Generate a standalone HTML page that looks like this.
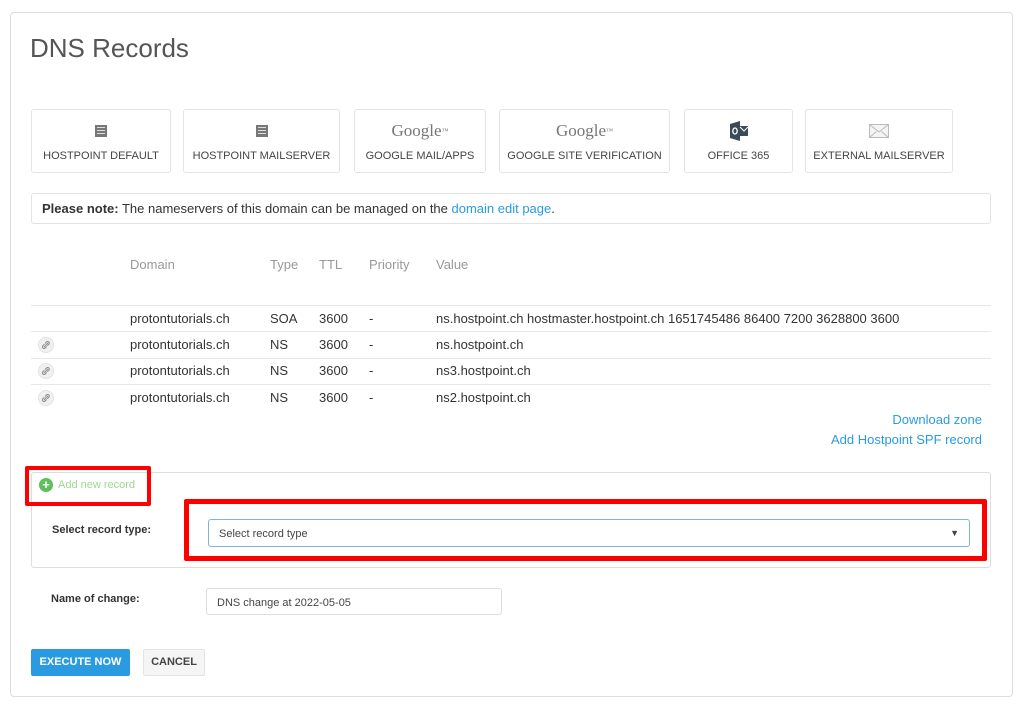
<!DOCTYPE html>
<html><head><style>
*{margin:0;padding:0;box-sizing:border-box}
body{width:1024px;height:713px;background:#fff;font-family:"Liberation Sans",sans-serif;color:#444;position:relative;overflow:hidden}
.a{position:absolute}
.card{left:10px;top:12px;width:1003px;height:685px;border:1px solid #ddd;border-radius:4px}
h1{position:absolute;left:30px;top:33px;font-size:26px;font-weight:normal;color:#555}
.btn{position:absolute;top:109px;height:64px;border:1px solid #e3e3e3;border-radius:3px;font-size:11px;color:#444;text-align:center}
.btn .l{position:absolute;left:0;right:0;top:40px}
.btn .i{position:absolute;left:0;right:0;top:12px;height:18px;display:flex;justify-content:center;align-items:center}
.g{font-family:"Liberation Serif",serif;font-size:17px;color:#777}
.note{left:31px;top:193px;width:960px;height:31px;border:1px solid #e3e3e3;border-radius:3px;font-size:13px;padding:7px 10px;color:#333}
.hd{top:257px;font-size:13px;color:#999}
.ln{left:31px;width:960px;height:1px;background:#e8e8e8}
.td{font-size:13px;color:#333}
.lk{color:#2a9be0;font-size:13px}
.chain{width:16px;height:16px;border-radius:50%;background:#f0f0f0;border:1px solid #e3e3e3}
</style></head><body>
<div class="a card"></div>
<h1>DNS Records</h1>

<div class="btn" style="left:31px;width:140px"><div class="i"><div style="width:12px;height:12px;border:2px solid #777;background:repeating-linear-gradient(#ddd 0 1px,#777 1px 3px)"></div></div><div class="l">HOSTPOINT DEFAULT</div></div>
<div class="btn" style="left:183px;width:157px"><div class="i"><div style="width:12px;height:12px;border:2px solid #777;background:repeating-linear-gradient(#ddd 0 1px,#777 1px 3px)"></div></div><div class="l">HOSTPOINT MAILSERVER</div></div>
<div class="btn" style="left:354px;width:132px"><div class="i g">Google<sup style="font-size:7px">™</sup></div><div class="l">GOOGLE MAIL/APPS</div></div>
<div class="btn" style="left:499px;width:171px"><div class="i g">Google<sup style="font-size:7px">™</sup></div><div class="l">GOOGLE SITE VERIFICATION</div></div>
<div class="btn" style="left:684px;width:109px"><div class="i"><svg width="22" height="20" viewBox="0 0 22 20"><path d="M2 3L12 0V20L2 17Z" fill="#3d4a55"/><rect x="12" y="5" width="8" height="10" fill="#3d4a55"/><ellipse cx="7" cy="10" rx="2.2" ry="3" fill="none" stroke="#fff" stroke-width="1.3"/><path d="M12 6l4 4 4-4" stroke="#fff" fill="none"/></svg></div><div class="l">OFFICE 365</div></div>
<div class="btn" style="left:805px;width:148px"><div class="i"><svg width="20" height="14"><rect x=".5" y=".5" width="19" height="13" fill="#f4f4f4" stroke="#bbb"/><path d="M.5 .5L10 8 19.5 .5M.5 13.5l7-6M19.5 13.5l-7-6" stroke="#bbb" fill="none"/></svg></div><div class="l">EXTERNAL MAILSERVER</div></div>

<div class="a note"><b>Please note:</b> The nameservers of this domain can be managed on the <span style="color:#2a9be0">domain edit page</span>.</div>

<div class="a hd" style="left:130px">Domain</div><div class="a hd" style="left:270px">Type</div><div class="a hd" style="left:319px">TTL</div><div class="a hd" style="left:369px">Priority</div><div class="a hd" style="left:436px">Value</div>

<div class="a ln" style="top:305px"></div>
<div class="a ln" style="top:331px"></div>
<div class="a ln" style="top:358px"></div>
<div class="a ln" style="top:384px"></div>

<div class="a td" style="left:130px;top:311px">protontutorials.ch</div><div class="a td" style="left:270px;top:311px">SOA</div><div class="a td" style="left:319px;top:311px">3600</div><div class="a td" style="left:369px;top:311px">-</div><div class="a td" style="left:436px;top:311px">ns.hostpoint.ch hostmaster.hostpoint.ch 1651745486 86400 7200 3628800 3600</div>
<div class="a chain" style="left:38px;top:337px"><svg width="14" height="14" viewBox="0 0 14 14"><path d="M5 9l4-4M6 5.5l1.5-1.5a1.6 1.6 0 012.3 2.3L8.3 7.8M7.7 8.5L6.2 10a1.6 1.6 0 01-2.3-2.3L5.4 6.2" stroke="#888" fill="none" stroke-width="1"/></svg></div><div class="a td" style="left:130px;top:337px">protontutorials.ch</div><div class="a td" style="left:270px;top:337px">NS</div><div class="a td" style="left:319px;top:337px">3600</div><div class="a td" style="left:369px;top:337px">-</div><div class="a td" style="left:436px;top:337px">ns.hostpoint.ch</div>
<div class="a chain" style="left:38px;top:363px"><svg width="14" height="14" viewBox="0 0 14 14"><path d="M5 9l4-4M6 5.5l1.5-1.5a1.6 1.6 0 012.3 2.3L8.3 7.8M7.7 8.5L6.2 10a1.6 1.6 0 01-2.3-2.3L5.4 6.2" stroke="#888" fill="none" stroke-width="1"/></svg></div><div class="a td" style="left:130px;top:363px">protontutorials.ch</div><div class="a td" style="left:270px;top:363px">NS</div><div class="a td" style="left:319px;top:363px">3600</div><div class="a td" style="left:369px;top:363px">-</div><div class="a td" style="left:436px;top:363px">ns3.hostpoint.ch</div>
<div class="a chain" style="left:38px;top:390px"><svg width="14" height="14" viewBox="0 0 14 14"><path d="M5 9l4-4M6 5.5l1.5-1.5a1.6 1.6 0 012.3 2.3L8.3 7.8M7.7 8.5L6.2 10a1.6 1.6 0 01-2.3-2.3L5.4 6.2" stroke="#888" fill="none" stroke-width="1"/></svg></div><div class="a td" style="left:130px;top:390px">protontutorials.ch</div><div class="a td" style="left:270px;top:390px">NS</div><div class="a td" style="left:319px;top:390px">3600</div><div class="a td" style="left:369px;top:390px">-</div><div class="a td" style="left:436px;top:390px">ns2.hostpoint.ch</div>

<div class="a lk" style="right:42px;top:412px">Download zone</div>
<div class="a lk" style="right:42px;top:432px">Add Hostpoint SPF record</div>

<div class="a" style="left:31px;top:472px;width:960px;height:96px;border:1px solid #ddd;border-radius:3px"></div>
<div class="a" style="left:39px;top:478px;width:14px;height:14px;border-radius:50%;background:#5cc15c;color:#fff;font-size:13px;font-weight:bold;text-align:center;line-height:14px">+</div>
<div class="a" style="left:58px;top:479px;font-size:11px;color:#9ed88e">Add new record</div>
<div class="a" style="left:25px;top:466px;width:126px;height:40px;border:4px solid #f00;border-radius:2px"></div>
<div class="a" style="left:52px;top:524px;font-size:11px;font-weight:bold;color:#333">Select record type:</div>
<div class="a" style="left:208px;top:519px;width:762px;height:28px;border:1px solid #7fb3e0;border-radius:3px;font-size:11px;padding:8px 10px;color:#444">Select record type<span style="position:absolute;right:10px;top:8px;font-size:9px">▼</span></div>
<div class="a" style="left:184px;top:499px;width:803px;height:62px;border:5px solid #f00;border-radius:2px"></div>

<div class="a" style="left:51px;top:593px;font-size:11px;font-weight:bold;color:#333">Name of change:</div>
<div class="a" style="left:206px;top:588px;width:296px;height:27px;border:1px solid #ddd;border-radius:3px;font-size:11px;padding:8px 10px;color:#444">DNS change at 2022-05-05</div>

<div class="a" style="left:31px;top:649px;width:99px;height:27px;background:#2a9be0;border-radius:2px;color:#fff;font-size:11px;font-weight:bold;text-align:center;line-height:27px">EXECUTE NOW</div>
<div class="a" style="left:143px;top:649px;width:62px;height:27px;background:#f5f5f5;border:1px solid #e3e3e3;border-radius:2px;color:#444;font-size:11px;font-weight:bold;text-align:center;line-height:25px">CANCEL</div>
</body></html>
